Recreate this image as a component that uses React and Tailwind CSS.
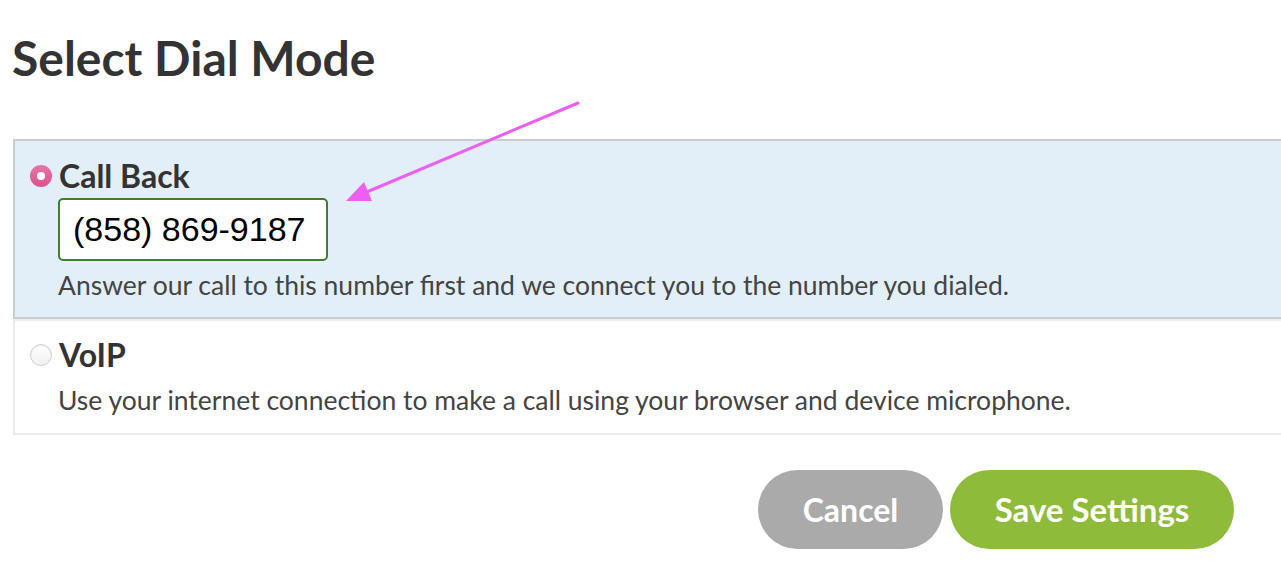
import React from "react";

const font = { fontFamily: "Lato, 'Noto Sans', sans-serif" };

const Radio = ({ checked }) =>
  checked ? (
    <span className="flex h-[22px] w-[22px] shrink-0 items-center justify-center rounded-full bg-gradient-to-b from-[#e873a8] to-[#d9538f]">
      <span className="h-[8px] w-[8px] rounded-full bg-white" />
    </span>
  ) : (
    <span className="h-[22px] w-[22px] shrink-0 rounded-full border border-[#cfcfcf] bg-gradient-to-b from-white to-[#f1f1f1] shadow-[inset_0_1px_1px_rgba(0,0,0,0.08)]" />
  );

const Arrow = () => (
  <svg className="pointer-events-none absolute left-0 top-0" width="1281" height="580">
    <line x1="578" y1="103" x2="362" y2="194" stroke="#ec5ff2" strokeWidth="3" strokeLinecap="round" />
    <polygon points="346,201 364,182 372,201" fill="#ec5ff2" />
  </svg>
);

export default function App() {
  return (
    <div className="relative h-[580px] w-[1281px] overflow-hidden bg-white text-[#333]" style={font}>
      <h1 className="pl-[12px] pt-[28px] text-[48px] font-bold leading-[60px] text-[#333]">
        Select Dial Mode
      </h1>

      <div className="ml-[13px] mt-[51px] w-[1290px]">
        {/* Call Back */}
        <div className="h-[180px] border-2 border-r-0 border-[#cccccc] bg-[#e2eef8] pl-[15px] pt-[16px]">
          <label className="flex items-center gap-[7px]">
            <Radio checked />
            <span className="text-[32px] font-bold leading-[38px] text-[#333]">Call Back</span>
          </label>
          <div className="ml-[28px] mt-[3px] flex h-[63px] w-[270px] items-center rounded-[5px] border-2 border-[#3d7f2a] bg-white pl-[13px]">
            <span className="text-[34px] text-black" style={{ fontFamily: "'Liberation Sans', Arial, sans-serif" }}>
              (858) 869-9187
            </span>
          </div>
          <p className="ml-[28px] mt-[8px] text-[26.5px] leading-[32px] text-[#444]">
            Answer our call to this number first and we connect you to the number you dialed.
          </p>
        </div>

        {/* VoIP */}
        <div className="h-[116px] border-2 border-t-2 border-r-0 border-[#ececec] bg-white pl-[15px] pt-[15px]">
          <label className="flex items-center gap-[7px]">
            <Radio />
            <span className="text-[32px] font-bold leading-[38px] text-[#333]">VoIP</span>
          </label>
          <p className="ml-[28px] mt-[10px] text-[26.5px] leading-[32px] text-[#444]">
            Use your internet connection to make a call using your browser and device microphone.
          </p>
        </div>
      </div>

      <div className="mr-[47px] mt-[35px] flex justify-end gap-[7px]">
        <button className="h-[79px] w-[185px] rounded-full bg-[#aaaaaa] text-[32px] font-bold text-white">
          Cancel
        </button>
        <button className="h-[79px] w-[284px] rounded-full bg-[#8fbb3a] text-[33px] font-bold text-white">
          Save Settings
        </button>
      </div>

      <Arrow />
    </div>
  );
}
